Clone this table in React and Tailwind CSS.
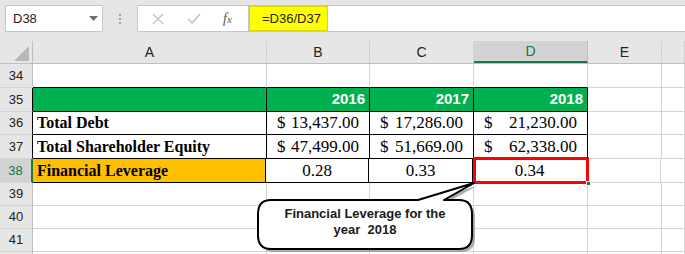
import React from 'react';

const cols = [
  { key: 'A', w: 'w-[234px]' },
  { key: 'B', w: 'w-[103px]' },
  { key: 'C', w: 'w-[104px]' },
  { key: 'D', w: 'w-[114px]' },
  { key: 'E', w: 'w-[74px]' },
  { key: 'F', w: 'flex-1' },
];

const serif = { fontFamily: '"Liberation Serif", "Times New Roman", serif' };

function RowHead({ n, h, edge = 'border-r-[#bfbfbf]', active = false }) {
  return (
    <div
      className={`w-[33px] shrink-0 ${h} flex items-center justify-center border-b border-b-[#d4d4d4] border-r ${edge} text-[13px] ${
        active ? 'bg-[#d2d2d2] text-[#217346] border-r-2' : 'bg-[#e6e6e6] text-[#222]'
      }`}
    >
      {n}
    </div>
  );
}

function Blank({ w, extra = '' }) {
  return <div className={`${w} shrink-0 border-r border-b border-[#d4d4d4] ${extra}`} />;
}

function Money({ w, sign, num }) {
  return (
    <div
      className={`${w} shrink-0 border-r border-b border-black flex items-center justify-between px-[10px] text-[17px] text-black`}
      style={serif}
    >
      <span>{sign}</span>
      <span>{num}</span>
    </div>
  );
}

export default function App() {
  return (
    <div
      className="relative w-[685px] h-[254px] overflow-hidden bg-white"
      style={{ fontFamily: '"Liberation Sans", Arial, sans-serif' }}
    >
      {/* formula bar */}
      <div className="h-[41px] bg-[#e6e6e6] flex items-start pt-[5px]">
        <div className="ml-[5px] w-[98px] h-[27px] bg-white border border-[#c6c6c6] flex items-center justify-between pl-[7px] pr-[4px] text-[13px] text-[#222]">
          <span>D38</span>
          <svg width="9" height="6" viewBox="0 0 9 6">
            <path d="M0 0 L9 0 L4.5 5 Z" fill="#6f6f6f" />
          </svg>
        </div>
        <div className="w-[34px] h-[27px] flex flex-col items-center justify-center gap-[2px]">
          <span className="w-[2px] h-[2px] bg-[#a0a0a0]" />
          <span className="w-[2px] h-[2px] bg-[#a0a0a0]" />
          <span className="w-[2px] h-[2px] bg-[#a0a0a0]" />
        </div>
        <div className="w-[112px] h-[27px] bg-white border border-[#c6c6c6] flex items-center">
          <svg className="ml-[14px]" width="12" height="12" viewBox="0 0 12 12">
            <path d="M1 1 L11 11 M11 1 L1 11" stroke="#c4c4c4" strokeWidth="1.4" />
          </svg>
          <svg className="ml-[23px]" width="14" height="12" viewBox="0 0 14 12">
            <path d="M1 6 L5 10 L13 1" stroke="#c4c4c4" strokeWidth="1.6" fill="none" />
          </svg>
          <span
            className="ml-[22px] italic text-[14px] text-[#555]"
            style={{ fontFamily: '"Liberation Serif", serif' }}
          >
            f<span className="text-[11px]">x</span>
          </span>
        </div>
        <div className="flex-1 h-[27px] bg-white border-y border-[#c6c6c6] flex items-stretch">
          <div className="w-[79px] bg-[#ffff00] border border-[#d8d800] flex items-center pl-[12px] text-[13px] text-[#222]">
            =D36/D37
          </div>
        </div>
      </div>

      {/* column headers */}
      <div className="flex h-[23px] bg-[#e6e6e6] border-b border-[#bfbfbf]">
        <div className="w-[33px] shrink-0 relative border-r border-[#bfbfbf]">
          <svg className="absolute right-[3px] bottom-[2px]" width="15" height="15" viewBox="0 0 15 15">
            <path d="M15 0 L15 15 L0 15 Z" fill="#b8b8b8" />
          </svg>
        </div>
        {cols.map((c) =>
          c.key === 'D' ? (
            <div
              key={c.key}
              className={`${c.w} shrink-0 bg-[#d2d2d2] border-r border-[#bfbfbf] border-b-2 border-b-[#217346] flex items-center justify-center text-[14px] text-[#217346]`}
            >
              D
            </div>
          ) : (
            <div
              key={c.key}
              className={`${c.w} shrink-0 border-r border-[#d0d0d0] flex items-center justify-center text-[14px] text-[#222]`}
            >
              {c.key === 'F' ? '' : c.key}
            </div>
          )
        )}
      </div>

      {/* row 34 */}
      <div className="flex h-[24px]">
        <RowHead n="34" h="h-[24px]" />
        <Blank w="w-[234px]" extra="border-b-black" />
        <Blank w="w-[103px]" extra="border-b-black" />
        <Blank w="w-[104px]" extra="border-b-black" />
        <Blank w="w-[114px]" extra="border-b-black" />
        <Blank w="w-[74px]" />
        <Blank w="flex-1" />
      </div>

      {/* row 35 */}
      <div className="flex h-[24px]">
        <RowHead n="35" h="h-[24px]" edge="border-r-black" />
        <div className="w-[234px] shrink-0 bg-[#00b050] border-r border-b border-black" />
        {['2016', '2017', '2018'].map((y, i) => (
          <div
            key={y}
            className={`${['w-[103px]', 'w-[104px]', 'w-[114px]'][i]} shrink-0 bg-[#00b050] border-r border-b border-black flex items-center justify-end pr-[4px] text-[15px] font-bold text-white`}
          >
            {y}
          </div>
        ))}
        <Blank w="w-[74px]" />
        <Blank w="flex-1" />
      </div>

      {/* row 36 */}
      <div className="flex h-[23px]">
        <RowHead n="36" h="h-[23px]" edge="border-r-black" />
        <div className="w-[234px] shrink-0 border-r border-b border-black flex items-center pl-[4px] text-[16px] font-bold text-black" style={serif}>
          Total Debt
        </div>
        <Money w="w-[103px]" sign="$" num="13,437.00" />
        <Money w="w-[104px]" sign="$" num="17,286.00" />
        <Money w="w-[114px]" sign="$" num="21,230.00" />
        <Blank w="w-[74px]" />
        <Blank w="flex-1" />
      </div>

      {/* row 37 */}
      <div className="flex h-[24px]">
        <RowHead n="37" h="h-[24px]" edge="border-r-black" />
        <div className="w-[234px] shrink-0 border-r border-b border-black flex items-center pl-[4px] text-[16px] font-bold text-black" style={serif}>
          Total Shareholder Equity
        </div>
        <Money w="w-[103px]" sign="$" num="47,499.00" />
        <Money w="w-[104px]" sign="$" num="51,669.00" />
        <Money w="w-[114px]" sign="$" num="62,338.00" />
        <Blank w="w-[74px]" />
        <Blank w="flex-1" />
      </div>

      {/* row 38 */}
      <div className="flex h-[24px]">
        <RowHead n="38" h="h-[24px]" edge="border-r-[#217346]" active />
        <div className="w-[233px] shrink-0 bg-[#ffc000] border-r border-b border-black flex items-center pl-[4px] text-[16px] font-bold text-black" style={serif}>
          Financial Leverage
        </div>
        {['0.28', '0.33', '0.34'].map((v, i) => (
          <div
            key={v}
            className={`${['w-[103px]', 'w-[104px]', 'w-[114px]'][i]} shrink-0 border-r border-b border-black flex items-center justify-center text-[17px] text-black`}
            style={serif}
          >
            {v}
          </div>
        ))}
        <Blank w="w-[74px]" />
        <Blank w="flex-1" />
      </div>

      {/* rows 39-42 */}
      {['39', '40', '41', ''].map((n, i) => (
        <div key={i} className="flex h-[23px]">
          <RowHead n={n} h="h-[23px]" />
          {cols.map((c) => (
            <Blank key={c.key} w={c.w} />
          ))}
        </div>
      ))}

      {/* selected cell outline */}
      <div className="absolute left-[473px] top-[157px] w-[116px] h-[27px] border-[3px] border-[#ff0000]" />
      <div className="absolute left-[586px] top-[181px] w-[5px] h-[5px] bg-[#217346] border border-white" />

      {/* callout */}
      <svg className="absolute left-0 top-0" width="685" height="254" viewBox="0 0 685 254">
        <path
          d="M273 203 L420 203 L477 186 L446 203 L461 203 Q475 203 475 217 L475 238 Q475 252 461 252 L273 252 Q261 252 261 238 L261 217 Q261 203 273 203 Z"
          fill="#8c8c8c"
          opacity="0.7"
        />
        <path
          d="M271 200 L418 200 L474 183 L444 200 L459 200 Q472 200 472 214 L472 235 Q472 249 459 249 L271 249 Q258 249 258 235 L258 214 Q258 200 271 200 Z"
          fill="#ffffff"
          stroke="#000000"
          strokeWidth="2"
          strokeLinejoin="round"
        />
      </svg>
      <div className="absolute left-[258px] top-[206px] w-[214px] flex flex-col items-center text-[13px] leading-[16px] font-bold text-[#1a1a1a]">
        <span>Financial Leverage for the</span>
        <span className="whitespace-pre">year  2018</span>
      </div>
    </div>
  );
}
